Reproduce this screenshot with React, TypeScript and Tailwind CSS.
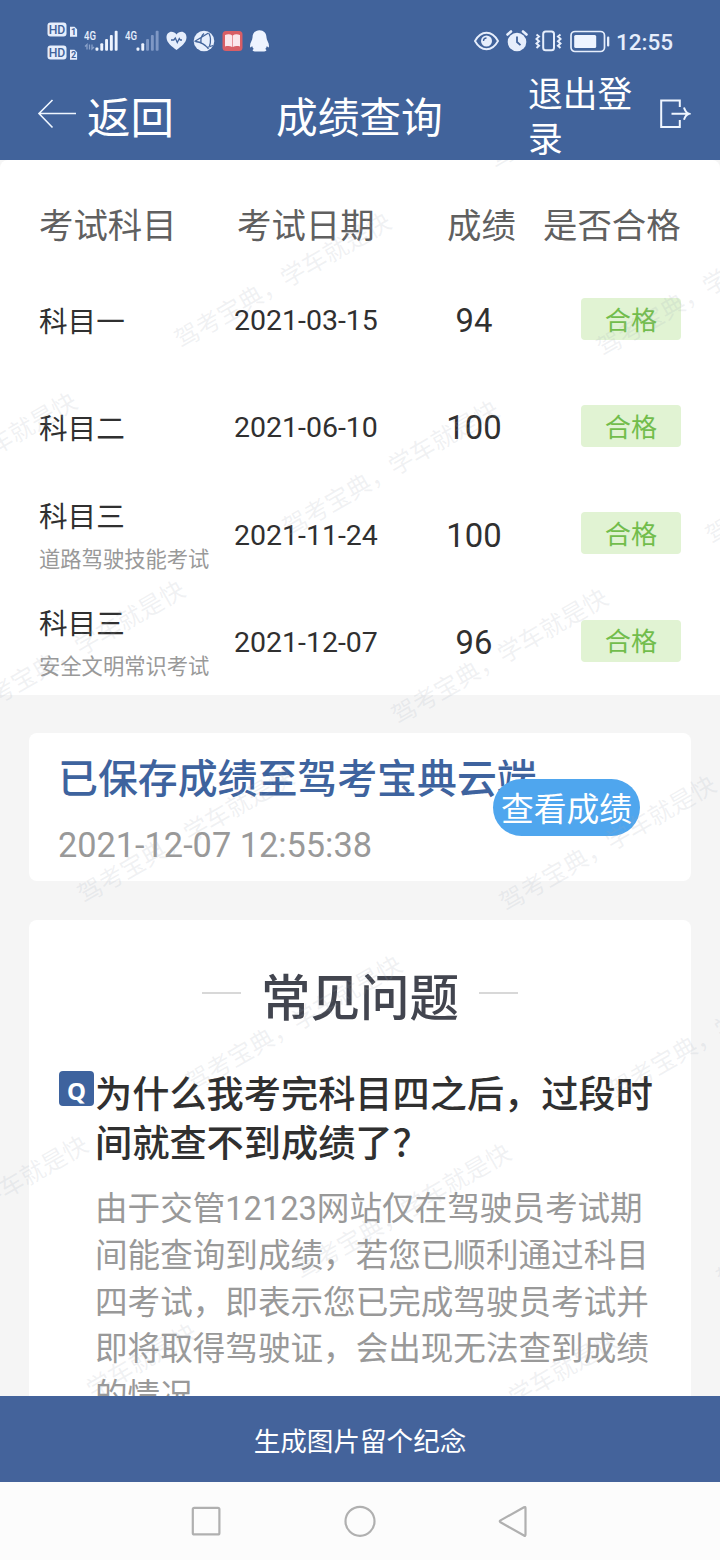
import React from "react";

type Result = { subject: string; note?: string; date: string; score: number };

const results: Result[] = [
  { subject: "科目一", date: "2021-03-15", score: 94 },
  { subject: "科目二", date: "2021-06-10", score: 100 },
  { subject: "科目三", note: "道路驾驶技能考试", date: "2021-11-24", score: 100 },
  { subject: "科目三", note: "安全文明常识考试", date: "2021-12-07", score: 96 },
];

const answerLines = [
  "由于交管12123网站仅在驾驶员考试期",
  "间能查询到成绩，若您已顺利通过科目",
  "四考试，即表示您已完成驾驶员考试并",
  "即将取得驾驶证，会出现无法查到成绩",
  "的情况。",
];

// Watermark centres lie on a skewed lattice over the page.
const watermarks: { x: number; y: number }[] = [];
for (let row = -1; row <= 7; row++) {
  for (let col = -2; col <= 2; col++) {
    const x = 282.5 + col * 422.5 + row * 108.5;
    const y = 281 + col * 8 + row * 187.8;
    if (x > -115 && x < 835 && y < 1480) watermarks.push({ x, y });
  }
}

function SimBadge({ n }: { n: string }) {
  return (
    <svg width="31" height="15" viewBox="0 0 31 15">
      <rect x="0.5" y="0.5" width="19" height="14" rx="3" fill="#e6eefc" />
      <text x="10" y="11.700" textAnchor="middle" fontFamily="Roboto" fontWeight="500" fontSize="12.200" fill="#41639b">HD</text>
      <path d="M23 4.800h4.500l2.600 2.400v7.500h-7.100z" fill="#e6eefc" />
      <text x="26.500" y="13.300" textAnchor="middle" fontFamily="Roboto" fontWeight="700" fontSize="9" fill="#41639b">{n}</text>
    </svg>
  );
}

function Signal({ bars, data }: { bars: number; data?: boolean }) {
  return (
    <svg width="36" height="24" viewBox="0 0 36 24">
      <text x="0" y="10.500" fontFamily="Roboto" fontWeight="500" fontSize="13" textLength="12" lengthAdjust="spacingAndGlyphs" fill="#e6eefc">4G</text>
      {data && <path d="M3 20.500v-5l-2 2M5.500 15.500v5M8 15.500v4.500l2-2" stroke="#8aa1c9" strokeWidth="1.300" fill="none" />}
      {[0, 1, 2, 3, 4].map((i) => (
        <rect key={i} x={11.5 + i * 4.8} y={18.5 - i * 4.2} width="2.9" height={3.2 + i * 4.2} rx="1" fill={i < bars ? "#eef4ff" : "#7f98c5"} />
      ))}
    </svg>
  );
}

function StatusBar() {
  return (
    <div className="flex h-[72px] items-start justify-between pt-[22px] pr-[47px] pl-[47px]">
      <div className="flex">
        <div className="flex w-[37px] flex-col gap-[8px]">
          <SimBadge n="1" />
          <SimBadge n="2" />
        </div>
        <div className="flex pt-[7px]">
          <div className="w-[41px]"><Signal bars={5} data /></div>
          <div className="w-[40.500px]"><Signal bars={2} /></div>
        </div>
        <div className="flex gap-[6.500px] pt-[8px]">
          <svg width="21" height="21" viewBox="0 0 21 21">
            <path d="M10.500 20C6 16.500 .5 12.500 .5 7.400.5 4 2.900 1.800 5.400 1.800c2.100 0 3.900 1.100 5.100 2.700 1.200-1.600 3-2.700 5.100-2.700 2.500 0 4.900 2.200 4.900 5.600 0 5.100-5.500 9.100-10 12.600z" fill="#e6eefc" />
            <path d="M5 10h2.800l1.500-2 2 4.500 2-4 1 1.500H16" stroke="#41639b" strokeWidth="1.300" fill="none" />
          </svg>
          <svg width="22" height="22" viewBox="0 0 22 22">
            <circle cx="11" cy="11" r="10.300" fill="#e6eefc" />
            <path d="M1.500 11.500 15.500 3M2.500 11.500c5 .5 9.500 2.500 13 7.500M8 13c-.5-4.500.5-7.500 3-9.500M16 3.500c2 4 2 8 .5 12.500M14 17.500l6-2" stroke="#41639b" strokeWidth="1.300" fill="none" />
          </svg>
          <svg width="21" height="22" viewBox="0 0 21 22">
            <rect x="0.5" y="1" width="20" height="20" rx="3.500" fill="#d85e66" />
            <path d="M3 5c3-1 5.500-.8 7.200.5V17C8 15.800 5.500 15.800 3 16.500zM18 5c-3-1-5.500-.8-7.200.5V17c2.200-1.200 4.700-1.200 7.200-.5z" fill="#fbe6ec" />
          </svg>
          <svg width="21" height="22" viewBox="0 0 21 22">
            <path d="M10.500.300C6.300.300 3.500 3.200 3.500 7.500 3.500 10.500 1 12.500 1 16c0 2 1 1.700 2.100 0 .3 1.200.9 2.200 1.700 3-1.900.9-1.300 2.500 1 2.500h9.400c2.300 0 2.900-1.600 1-2.500.8-.8 1.400-1.800 1.700-3 1.100 1.700 2.100 2 2.100 0 0-3.500-2.500-5.500-2.500-8.500C17.500 3.200 14.700.300 10.500.300z" fill="#eef4ff" />
          </svg>
        </div>
      </div>
      <div className="flex pt-[8px]">
        <svg className="mr-[7px]" width="25" height="21" viewBox="0 0 25 21">
          <path d="M1 11C4 5.500 8 2.700 12.500 2.700S21 5.500 24 11C21 16.500 17 19.300 12.500 19.300S4 16.500 1 11z" fill="none" stroke="#e6eefc" strokeWidth="1.900" />
          <circle cx="12.500" cy="11" r="5.500" fill="#e6eefc" />
          <path d="M9.500 11a3 3 0 0 1 3-3" stroke="#41639b" strokeWidth="1.300" fill="none" />
        </svg>
        <svg className="mr-[7px]" width="22" height="22" viewBox="0 0 22 22">
          <circle cx="11" cy="12" r="9.300" fill="#e6eefc" />
          <path d="M1.500 4.500 5 1.500M20.500 4.500 17 1.500" stroke="#e6eefc" strokeWidth="2.600" strokeLinecap="round" />
          <path d="M11 6.500V12l3.500 3.200" stroke="#41639b" strokeWidth="1.800" fill="none" />
        </svg>
        <svg className="mr-[8px]" width="27" height="22" viewBox="0 0 27 22">
          <rect x="8.200" y="1.500" width="10.800" height="18.800" rx="2.500" fill="none" stroke="#e6eefc" strokeWidth="2" />
          <path d="M1.500 4.500l2.500 2-2.500 2.400 2.500 2.300-2.500 2.300 2.500 2.300-2.500 2.200M25.500 4.500l-2.500 2 2.500 2.400-2.500 2.300 2.500 2.300-2.500 2.300 2.500 2.200" fill="none" stroke="#e6eefc" strokeWidth="2" />
        </svg>
        <svg width="41" height="23" viewBox="0 0 41 23">
          <rect x="1" y="1.500" width="33.500" height="20" rx="4" fill="none" stroke="#e6eefc" strokeWidth="1.700" />
          <rect x="4.200" y="5" width="22" height="13" rx="1.500" fill="#eef4ff" />
          <rect x="37" y="6.500" width="2.300" height="10" rx="1" fill="#e6eefc" />
        </svg>
        <span className="ml-[5px] w-[57px] text-[22.500px] leading-[24px] font-medium text-[#e6eefc]">12:55</span>
      </div>
    </div>
  );
}

function NavBar() {
  return (
    <div className="flex h-[88px] items-center pl-[37px] text-white">
      <svg className="-mt-[4px]" width="40" height="32" viewBox="0 0 40 32">
        <path d="M15.500 2 2 15.500l13.500 14M2 15.500h37" fill="none" stroke="#eff6ff" strokeWidth="1.600" />
      </svg>
      <span className="ml-[10px] w-[189px] pt-[7px] text-[43.500px] leading-[64px]">返回</span>
      <h1 className="w-[252px] pt-[5px] text-[41.700px] leading-[64px]">成绩查询</h1>
      <span className="w-[108px] pt-[4px] text-[34.700px] leading-[45px]">退出登录</span>
      <svg className="-mt-[4px] ml-[23px]" width="32" height="32" viewBox="0 0 32 32">
        <path d="M20.800 9V2.500H2.200v26.600h18.600V22M12.500 15.800h17M25 9.500c1 3.500 2.500 5.500 5 6.300-2.500.8-4 2.800-5 6" fill="none" stroke="#eff6ff" strokeWidth="2" />
      </svg>
    </div>
  );
}

function ResultTable() {
  return (
    <section className="h-[535px] rounded-t-[8px] bg-white pl-[39px]">
      <div className="grid h-[107px] grid-cols-[198px_210px_96px_138px] items-center pt-[24px] text-[34.400px] leading-[48px] whitespace-nowrap text-[#606060]">
        <span>考试科目</span>
        <span>考试日期</span>
        <span>成绩</span>
        <span>是否合格</span>
      </div>
      {results.map((r) => (
        <div key={r.date} className="grid h-[107.300px] grid-cols-[195px_185px_110px_52px_100px] items-center whitespace-nowrap text-[#303030]">
          <div className={r.note ? "pt-[6px]" : "pt-[3px]"}>
            <div className="text-[28.600px] leading-[40px]">{r.subject}</div>
            {r.note && <div className="pt-[3px] text-[21.300px] leading-[40px] text-[#999]">{r.note}</div>}
          </div>
          <span className="pt-[1px] text-[28.500px] leading-[40px]">{r.date}</span>
          <span className="pt-[1px] text-center text-[32.800px] leading-[40px]">{r.score}</span>
          <span />
          <span className="-mt-[4px] flex h-[42px] items-center justify-center rounded-[4px] bg-[#e1f3d3] pt-[5px] text-[26.200px] text-[#72bd4c]">合格</span>
        </div>
      ))}
    </section>
  );
}

function SavedCard() {
  return (
    <section className="relative mx-[29px] mt-[38px] h-[148px] rounded-[8px] bg-white pt-[19px] pl-[29px] whitespace-nowrap">
      <div className="text-[39.900px] leading-[56px] font-medium text-[#3e639e]">已保存成绩至驾考宝典云端</div>
      <div className="mt-[13px] text-[34.300px] leading-[48px] text-[#999]">2021-12-07 12:55:38</div>
      <button className="absolute top-[46px] left-[464px] flex h-[57px] w-[147px] items-center justify-center rounded-full bg-[#4fa6ee] pt-[7px] text-[32.800px] text-white">查看成绩</button>
    </section>
  );
}

function Faq() {
  return (
    <section className="mx-[29px] mt-[39px] h-[476px] overflow-hidden rounded-t-[8px] bg-white pt-[40px] whitespace-nowrap">
      <div className="flex h-[72px] items-center justify-center gap-[20px]">
        <span className="mt-[-6px] h-[2px] w-[39px] bg-[#d8d8d8]" />
        <h2 className="pt-[5px] text-[49.500px] leading-[72px] font-medium text-[#42454f]">常见问题</h2>
        <span className="mt-[-6px] h-[2px] w-[39px] bg-[#d8d8d8]" />
      </div>
      <div className="mt-[36px] flex pl-[30px]">
        <span className="mt-[3px] flex h-[35px] w-[35px] items-center justify-center rounded-[4px] bg-[#3e639e] pt-[4px] font-['Noto_Sans'] text-[24px] leading-[28px] font-bold text-white">Q</span>
        <div className="ml-[1px] pt-[3px]">
          <div className="text-[37.200px] leading-[49px] font-medium text-[#303030]">
            <p>为什么我考完科目四之后，过段时</p>
            <p>间就查不到成绩了？</p>
          </div>
          <div className="mt-[17px] text-[32.600px] leading-[46.800px] text-[#999]">
            {answerLines.map((line) => (
              <p key={line}>{line}</p>
            ))}
          </div>
        </div>
      </div>
    </section>
  );
}

function SystemNav() {
  return (
    <div className="flex h-[78px] items-center justify-center gap-[121px] bg-[#fcfcfc]">
      <svg width="32" height="32" viewBox="0 0 32 32" fill="none" stroke="#b0b0b0" strokeWidth="2.200">
        <rect x="1.800" y="2.800" width="26.600" height="26.600" rx="1.500" />
      </svg>
      <svg width="32" height="32" viewBox="0 0 32 32" fill="none" stroke="#b0b0b0" strokeWidth="2.200">
        <circle cx="16" cy="16.300" r="14.500" />
      </svg>
      <svg width="32" height="32" viewBox="0 0 32 32" fill="none" stroke="#b0b0b0" strokeWidth="2.200" strokeLinejoin="round">
        <path d="M27 2.200Q28.500 1.500 28.500 3v26.500Q28.500 31.500 27 30.500L3.500 17.300Q2 16.300 3.500 15.400z" />
      </svg>
    </div>
  );
}

export default function App() {
  return (
    <div lang="zh-CN" className="flex h-[1560px] w-[720px] flex-col overflow-hidden bg-[#f5f5f5] font-['Roboto','Noto_Sans_CJK_SC',sans-serif]">
      <header className="h-[160px] shrink-0 bg-[#41639b]">
        <StatusBar />
        <NavBar />
      </header>
      <main className="relative h-[1236px] shrink-0 overflow-hidden">
        <ResultTable />
        <SavedCard />
        <Faq />
        <div aria-hidden="true" className="pointer-events-none absolute inset-0 z-10">
          {watermarks.map((w) => (
            <span
              key={`${w.x},${w.y}`}
              className="absolute -translate-x-1/2 -translate-y-1/2 -rotate-30 text-[24.500px] leading-[36px] whitespace-nowrap text-[#a0aab6]/16"
              style={{ left: w.x, top: w.y - 160 }}
            >
              驾考宝典，学车就是快
            </span>
          ))}
        </div>
      </main>
      <button className="h-[86px] shrink-0 bg-[#44639b] pt-[6px] text-[26.600px] text-white">生成图片留个纪念</button>
      <SystemNav />
    </div>
  );
}
